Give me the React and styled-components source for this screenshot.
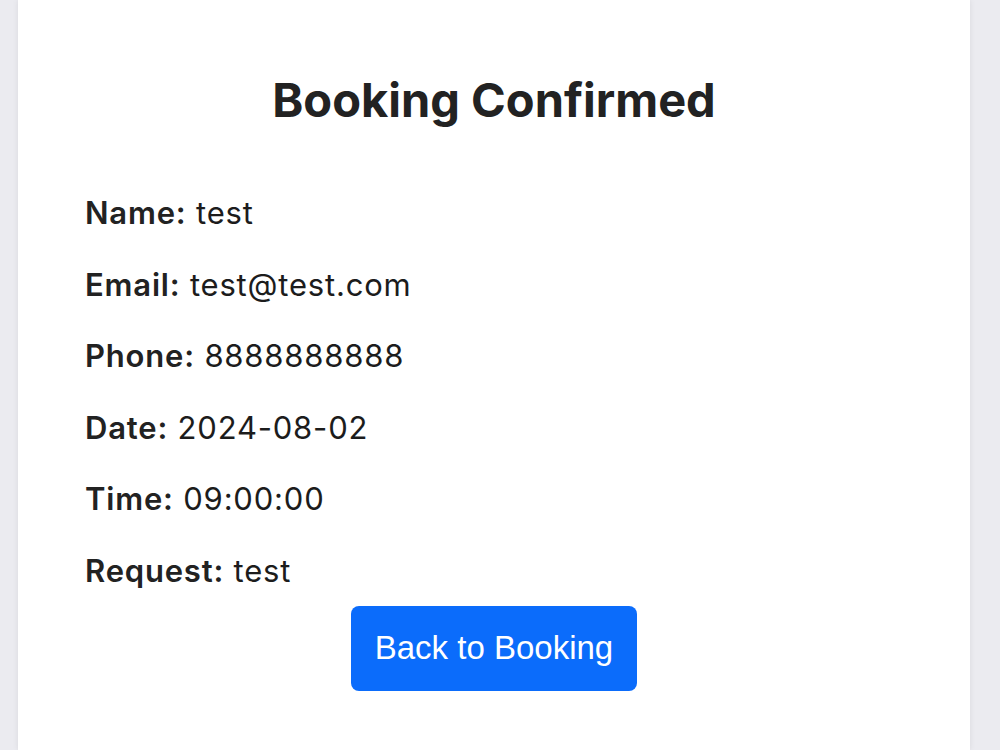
import React from "react";
import styled, { createGlobalStyle } from "styled-components";

const GlobalStyle = createGlobalStyle`
  html, body {
    margin: 0;
    padding: 0;
    background: #ebebf0;
    height: 100%;
    overflow: hidden;
  }
  body {
    font-family: Inter, "Noto Sans", sans-serif;
  }
`;

const Page = styled.div`
  padding: 0 30px 0 18px;
  height: 750px;
`;

const Card = styled.div`
  background: #fff;
  height: 100%;
  padding: 76px 67px 0;
  box-sizing: border-box;
  box-shadow: 0 0 6px rgba(0, 0, 0, 0.08);
  display: flex;
  flex-direction: column;
`;

const Title = styled.h1`
  margin: 0 0 72px;
  text-align: center;
  font-size: 47px;
  font-weight: 700;
  line-height: 47px;
  color: #222;
`;

const Details = styled.div`
  display: flex;
  flex-direction: column;
  gap: 35.6px;
`;

const Row = styled.p`
  margin: 0;
  font-size: 31px;
  letter-spacing: 0.8px;
  line-height: 36px;
  color: #1c1c1c;
  b {
    font-weight: 600;
    color: #222;
  }
`;

const ButtonWrap = styled.div`
  display: flex;
  justify-content: center;
  margin-top: 17px;
`;

const BackButton = styled.button`
  width: 286px;
  height: 85px;
  border: none;
  border-radius: 8px;
  background: #0b6cfb;
  color: #fff;
  font-family: "Liberation Sans", Arial, sans-serif;
  font-size: 33px;
  cursor: pointer;
`;

const details = [
  ["Name", "test"],
  ["Email", "test@test.com"],
  ["Phone", "8888888888"],
  ["Date", "2024-08-02"],
  ["Time", "09:00:00"],
  ["Request", "test"],
];

export default function App() {
  return (
    <>
      <GlobalStyle />
      <Page>
        <Card>
          <Title>Booking Confirmed</Title>
          <Details>
            {details.map(([label, value]) => (
              <Row key={label}>
                <b>{label}:</b> {value}
              </Row>
            ))}
          </Details>
          <ButtonWrap>
            <BackButton>Back to Booking</BackButton>
          </ButtonWrap>
        </Card>
      </Page>
    </>
  );
}
